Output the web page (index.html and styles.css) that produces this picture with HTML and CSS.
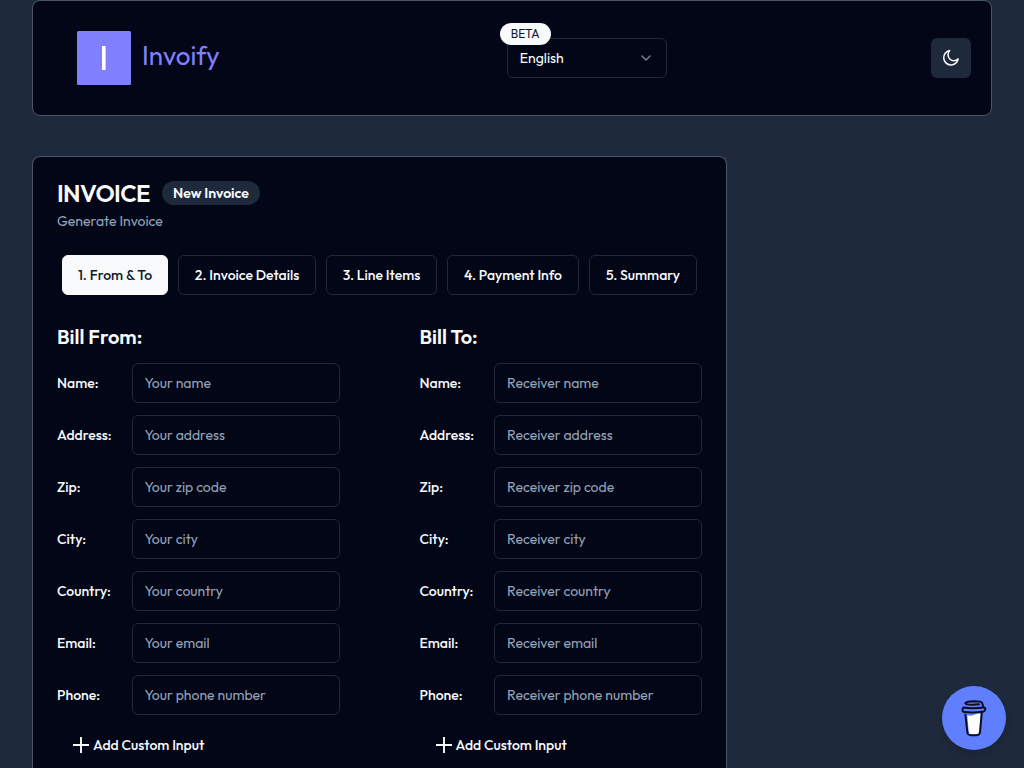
FILE: index.html
```html
<!DOCTYPE html>
<html lang="en">
<head>
<meta charset="utf-8">
<title>Invoify</title>
<link rel="stylesheet" href="styles.css">
</head>
<body>
<header class="header">
  <div class="logo">
    <svg width="54" height="54" viewBox="0 0 54 54"><rect width="54" height="54" rx="1.5" fill="#8080ff"/><path d="M26.8 15v24" stroke="#fff" stroke-width="3.6"/></svg>
    <span class="logo-text">Invoify</span>
  </div>
  <div class="lang">
    <span class="beta">BETA</span>
    <button class="select"><span>English</span>
      <svg width="16" height="16" viewBox="0 0 24 24" fill="none" stroke="#808490" stroke-width="2" stroke-linecap="round" stroke-linejoin="round"><path d="m6 9 6 6 6-6"/></svg>
    </button>
  </div>
  <button class="theme" aria-label="Theme">
    <svg width="20" height="20" viewBox="0 0 20 20" fill="none" stroke="#f8fafc" stroke-width="1.5" stroke-linecap="round" stroke-linejoin="round"><path d="M8.700 2.500A7.300 7.300 0 1 0 17.200 10.900 5.600 5.600 0 0 1 8.700 2.500Z"/></svg>
  </button>
</header>
<main class="card">
  <div class="title-row"><h1 class="title">INVOICE</h1><span class="badge">New Invoice</span></div>
  <p class="subtitle">Generate Invoice</p>
  <nav class="tabs">
    <button class="tab t1 active">1. From &amp; To</button>
    <button class="tab t2">2. Invoice Details</button>
    <button class="tab t3">3. Line Items</button>
    <button class="tab t4">4. Payment Info</button>
    <button class="tab t5">5. Summary</button>
  </nav>
  <div class="columns">
    <section>
      <h2 class="heading">Bill From:</h2>
      <div class="fields">
        <label class="field"><span>Name:</span><input placeholder="Your name"></label>
        <label class="field"><span>Address:</span><input placeholder="Your address"></label>
        <label class="field"><span>Zip:</span><input placeholder="Your zip code"></label>
        <label class="field"><span>City:</span><input placeholder="Your city"></label>
        <label class="field"><span>Country:</span><input placeholder="Your country"></label>
        <label class="field"><span>Email:</span><input placeholder="Your email"></label>
        <label class="field"><span>Phone:</span><input placeholder="Your phone number"></label>
      </div>
      <button class="add"><svg width="16" height="16" viewBox="0 0 16 16" stroke="#f8fafc" stroke-width="1.9"><path d="M8 0v16M0 8h16"/></svg><span>Add Custom Input</span></button>
    </section>
    <section>
      <h2 class="heading">Bill To:</h2>
      <div class="fields">
        <label class="field"><span>Name:</span><input placeholder="Receiver name"></label>
        <label class="field"><span>Address:</span><input placeholder="Receiver address"></label>
        <label class="field"><span>Zip:</span><input placeholder="Receiver zip code"></label>
        <label class="field"><span>City:</span><input placeholder="Receiver city"></label>
        <label class="field"><span>Country:</span><input placeholder="Receiver country"></label>
        <label class="field"><span>Email:</span><input placeholder="Receiver email"></label>
        <label class="field"><span>Phone:</span><input placeholder="Receiver phone number"></label>
      </div>
      <button class="add"><svg width="16" height="16" viewBox="0 0 16 16" stroke="#f8fafc" stroke-width="1.9"><path d="M8 0v16M0 8h16"/></svg><span>Add Custom Input</span></button>
    </section>
  </div>
</main>
<button class="coffee" aria-label="Buy me a coffee">
  <svg width="26" height="38" viewBox="0 0 26 38" fill="none" stroke="#0d0c22" stroke-width="2" stroke-linecap="round" stroke-linejoin="round">
    <path d="M6.300 16.200Q11 17.500 14 15.600 17 13.800 19.800 14.800L18.300 35Q13 36.500 8 35Z" fill="#fff" stroke="none"/>
    <path d="M4.400 15.500 6.300 33Q6.600 36 10 36.200h5.500q3.200 0 3.500-3.200L20.800 13.600"/>
    <path d="M2.500 8.600Q1.300 9 1.500 11.300 1.600 12.900 3.500 13 13 14 22.800 12.400 24.300 12 24.300 10 24.200 8.300 22.500 8.400 12 9.900 2.500 8.600Z"/>
    <path d="M22.300 8 21 3.600Q20.400 2.300 13 2.200 4.500 2.400 4.300 4.200 4.800 5.800 12 5.700L18 5.300"/>
  </svg>
</button>
</body>
</html>
```
FILE: styles.css
```css
* { box-sizing: border-box; }
body {
  margin: 0; padding: 0 32px; height: 768px; overflow: hidden;
  background: #1e293b; color: #f8fafc;
  font: 500 14px/20px Outfit, Lato, sans-serif;
}
button { font: inherit; color: inherit; padding: 0; margin: 0; border: 0; background: none; }
h1, h2, p { margin: 0; }
svg { display: block; flex: none; }
.header {
  display: flex; align-items: center; justify-content: space-between;
  height: 116px; padding: 0 20px 0 43.5px;
  background: #020617; border: 1px solid #4b5563; border-radius: 8px;
}
.logo { display: flex; align-items: center; gap: 11.5px; width: 160px; }
.logo-text { font-size: 26px; font-weight: 400; line-height: 32px; color: #8080ff; padding-bottom: 5px; }
.lang { position: relative; margin-left: 6px; }
.select {
  display: flex; align-items: center; justify-content: space-between;
  width: 160px; height: 40px; padding: 0 12px;
  border: 1px solid #1e293b; border-radius: 6px; font-weight: 400;
}
.beta {
  position: absolute; left: -7px; top: -15px; width: 51px; height: 22px;
  border-radius: 11px; background: #f8fafc; color: #0f172a;
  font-size: 12px; line-height: 22px; font-weight: 400; text-align: center;
}
.theme { display: flex; align-items: center; justify-content: center; width: 40px; height: 40px; border-radius: 6px; background: #1e293b; }
.card {
  width: 695px; height: 612px; margin-top: 40px; padding: 20px 24px 0;
  background: #020617; border: 1px solid #4b5563; border-bottom: 0; border-radius: 8px 8px 0 0;
}
.title-row { display: flex; align-items: center; gap: 12px; height: 32px; }
.title { width: 93px; font-size: 24px; line-height: 32px; font-weight: 600; letter-spacing: -.6px; white-space: nowrap; }
.badge { width: 98px; height: 24px; border-radius: 12px; background: #1e293b; line-height: 24px; text-align: center; font-weight: 600; }
.subtitle { margin-top: 2px; color: #94a3b8; font-weight: 400; }
.tabs { display: flex; gap: 10px; padding: 24px 5px 0; }
.tab { height: 40px; border: 1px solid #1e293b; border-radius: 6px; white-space: nowrap; }
.tab.active { background: #f8fafc; color: #0f172a; border-color: #f8fafc; }
.t1 { width: 106px; } .t2 { width: 138px; } .t3 { width: 111px; } .t4 { width: 132px; } .t5 { width: 108px; }
.columns { display: grid; grid-template-columns: 282.5px 282.5px; column-gap: 80px; margin-top: 28px; }
.heading { font-size: 20px; line-height: 28px; font-weight: 600; }
.fields { display: flex; flex-direction: column; gap: 12px; margin-top: 12px; }
.field { display: flex; align-items: center; justify-content: space-between; }
.field input {
  width: 208px; height: 40px; padding: 0 12px; margin: 0; outline: none;
  background: transparent; border: 1px solid #1e293b; border-radius: 6px;
  font: inherit; font-weight: 400; color: inherit;
}
.field input::placeholder { color: #94a3b8; opacity: 1; }
.add { display: flex; align-items: center; gap: 4px; height: 40px; margin: 10px 0 0 16px; white-space: nowrap; }
.coffee {
  position: absolute; left: 942px; top: 686px; width: 64px; height: 64px;
  display: flex; align-items: center; justify-content: center;
  border-radius: 50%; background: #5f7fff; box-shadow: 0 4px 8px rgba(0,0,0,.15);
}
```
